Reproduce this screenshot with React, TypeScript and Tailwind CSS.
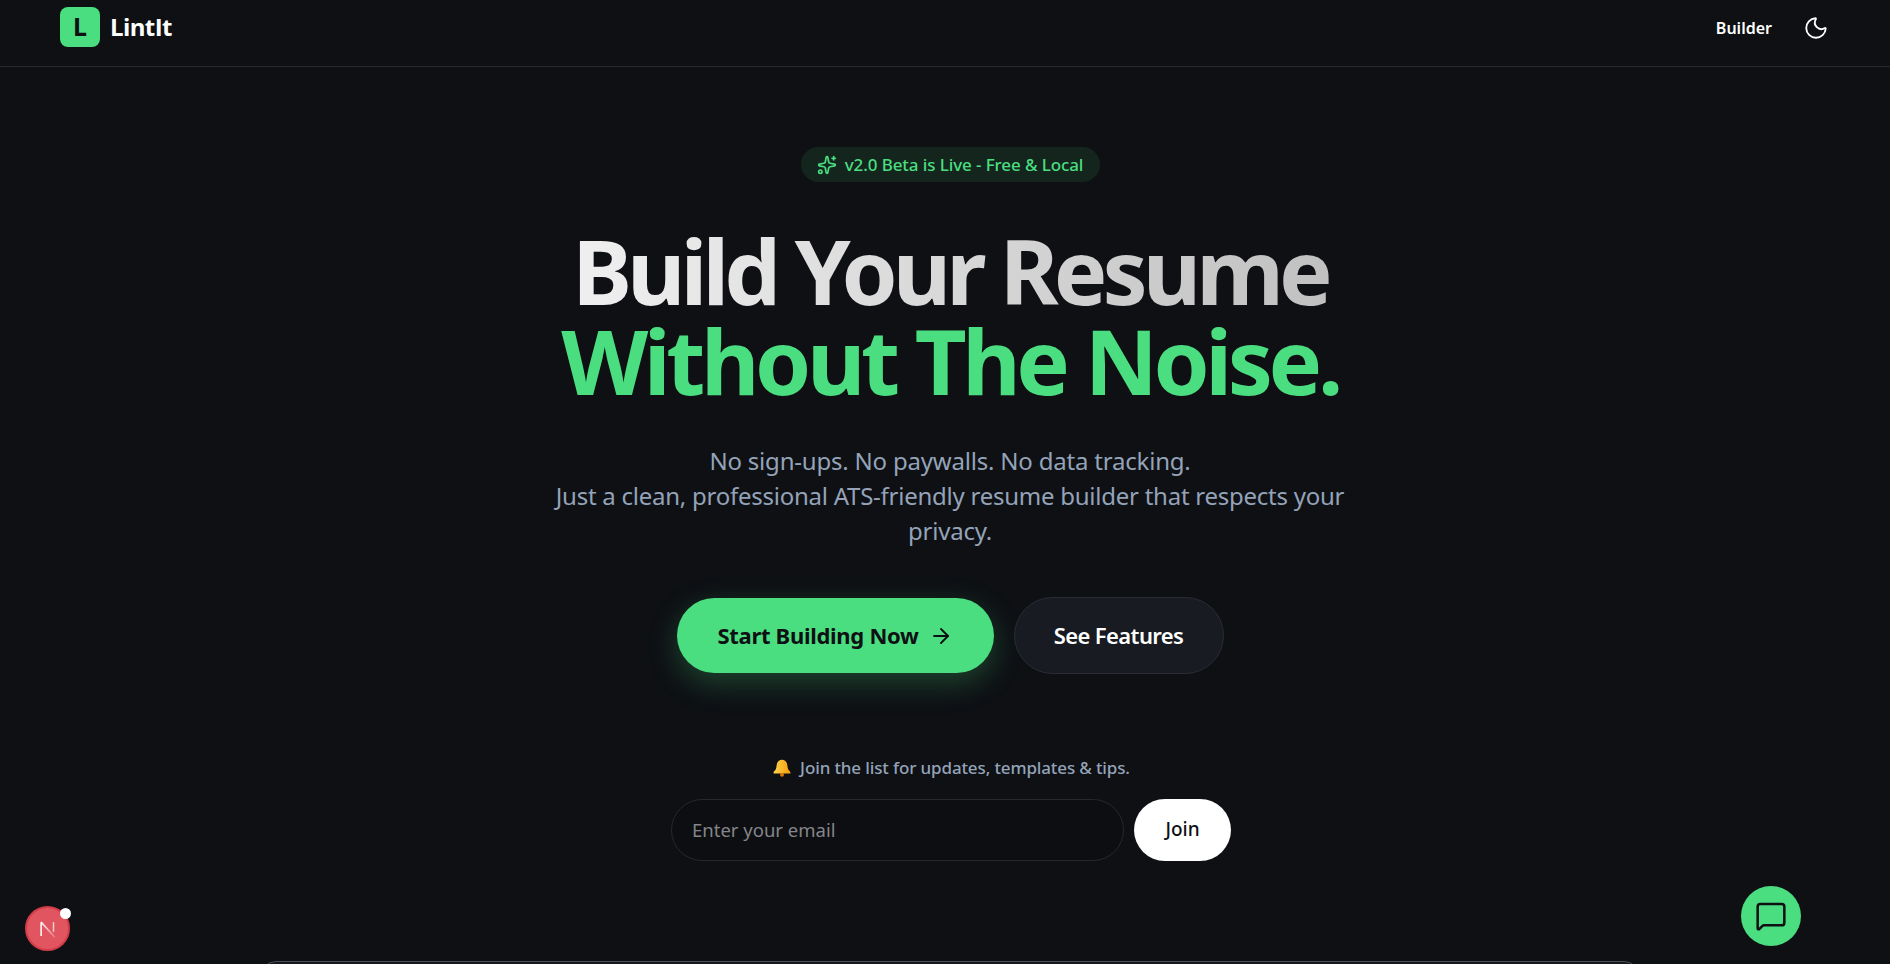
import { ArrowRight, MessageSquare, Moon, Sparkles } from "lucide-react";

function Bell() {
  return (
    <svg width="18" height="18" viewBox="0 0 18 18" aria-hidden="true">
      <defs>
        <linearGradient id="bell" x1="0" y1="0" x2="1" y2="0">
          <stop offset="0" stopColor="#fcd34d" />
          <stop offset="1" stopColor="#f59e0b" />
        </linearGradient>
      </defs>
      <path d="M9 .8c-3.300 0-5.200 2.700-5.400 5.800-.2 3-.9 4.700-3 6.400v1.500h16.800V13c-2.100-1.700-2.800-3.400-3-6.400C14.200 3.500 12.300.8 9 .8z" fill="url(#bell)" />
      <circle cx="9" cy="15.700" r="2" fill="#d97706" />
    </svg>
  );
}

function NextMark() {
  return (
    <svg width="22" height="22" viewBox="0 0 16 16" aria-hidden="true">
      <defs>
        <linearGradient id="nfade" x1="0" y1="0" x2="1" y2="1">
          <stop offset="0" stopColor="#ffffff" />
          <stop offset="1" stopColor="#ffffff" stopOpacity="0.2" />
        </linearGradient>
      </defs>
      <path d="M3 13V3" stroke="#ffffff" strokeWidth="1.100" fill="none" />
      <path d="M3 3 L13 14" stroke="url(#nfade)" strokeWidth="1.100" fill="none" />
      <path d="M12 3V10" stroke="#ffffff" strokeOpacity="0.7" strokeWidth="1.100" fill="none" />
    </svg>
  );
}

export default function App() {
  return (
    <div className="h-screen overflow-hidden bg-[#0e1014] text-white font-['Noto_Sans',sans-serif]">
      <header className="h-[67px] border-b border-[#26282d] flex justify-between items-start pt-[7px] pl-[60px] pr-[61px]">
        <div className="flex items-center gap-[10px]">
          <div className="w-10 h-10 rounded-lg bg-[#4ade80] flex items-center justify-center text-[#0e1014] text-[25px] font-bold">L</div>
          <span className="text-2xl font-bold tracking-tight font-['Open_Sans',sans-serif]">LintIt</span>
        </div>
        <div className="flex items-center h-10 gap-[31px] pt-[2px]">
          <span className="text-base font-semibold">Builder</span>
          <Moon className="w-[26px] h-[26px]" strokeWidth={1.7} />
        </div>
      </header>

      <main className="flex flex-col items-center pt-20 pl-[10px]">
        <div className="h-[35px] w-[299px] rounded-full bg-[#4ade80]/10 flex items-center justify-center gap-2 text-[#4ade80] text-[17px] font-medium">
          <Sparkles className="w-5 h-5" />
          <span className="tracking-[-0.1px]">v2.0 Beta is Live - Free &amp; Local</span>
        </div>

        <h1 className="mt-[43px] text-[90px] leading-[90px] font-bold text-center">
          <span className="block tracking-[-5px] bg-gradient-to-r from-[#f0f0f0] to-[#c0c0c0] bg-clip-text text-transparent">Build Your Resume</span>
          <span className="block tracking-[-4.4px] text-[#4ade80]">Without The Noise.</span>
        </h1>

        <p className="mt-[38px] w-[800px] text-2xl leading-[35px] text-[#94a3b8] text-center">
          <span className="tracking-[-0.2px]">No sign-ups. No paywalls. No data tracking.</span><br />
          <span className="tracking-[-0.25px]">Just a clean, professional ATS-friendly resume builder that respects your privacy.</span>
        </p>

        <div className="mt-[49px] flex items-center gap-5">
          <button className="w-[317px] h-[75px] rounded-full bg-[#4ade80] text-[#0e1014] text-[22px] font-bold flex items-center justify-center gap-[10px] shadow-[0_10px_30px_rgba(74,222,128,0.25)]">
            <span className="tracking-[-0.3px]">Start Building Now</span> <ArrowRight className="w-6 h-6" strokeWidth={1.8} />
          </button>
          <button className="w-[210px] h-[77px] rounded-full bg-[#181b22] border border-[#2a2d34] text-[22px] font-semibold tracking-[-0.6px]">
            See Features
          </button>
        </div>

        <p className="mt-[81px] ml-[3px] flex items-center gap-[9px] text-[17px] tracking-[-0.13px] font-medium text-[#94a3b8]">
          <Bell /> Join the list for updates, templates &amp; tips.
        </p>

        <div className="mt-[18px] ml-[2px] flex gap-[10px]">
          <input
            placeholder="Enter your email"
            className="w-[453px] h-[62px] rounded-full bg-[#0c0e11] border border-[#26282d] px-5 text-[18.500px] placeholder:text-[#85858a] outline-none"
          />
          <button className="w-[97px] h-[62px] rounded-full bg-white text-[#0e1014] text-[19px] font-medium">Join</button>
        </div>

        <div className="mt-[100px] w-[1380px] h-20 rounded-t-2xl border border-[#4a4d54] bg-[#15171c]" />
      </main>

      <div className="fixed left-[25px] top-[906px] w-[45px] h-[45px] rounded-full bg-[#e05560] border-2 border-[#d23c48] flex items-center justify-center">
        <NextMark />
        <span className="absolute -right-[3px] top-0 w-[11px] h-[11px] rounded-full bg-white" />
      </div>

      <button className="fixed left-[1741px] top-[886px] w-[60px] h-[60px] rounded-full bg-[#4ade80] flex items-center justify-center text-[#0e1014]">
        <MessageSquare className="w-8 h-8" strokeWidth={1.9} />
      </button>
    </div>
  );
}
